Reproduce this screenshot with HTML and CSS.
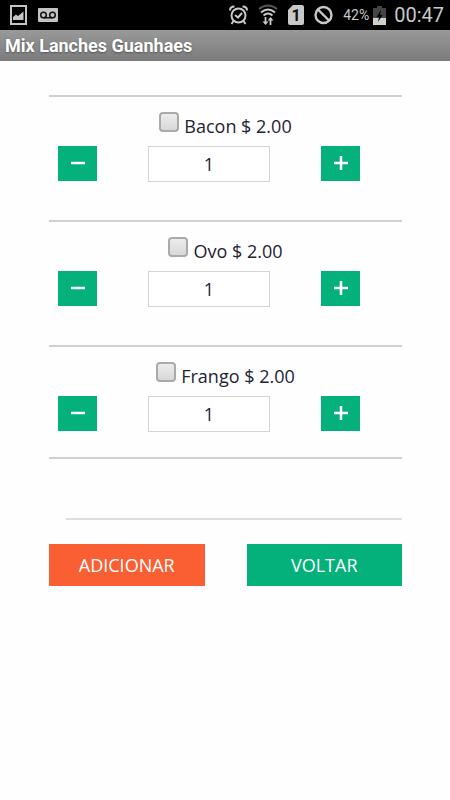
FILE: index.html
```html
<!DOCTYPE html>
<html lang="pt-BR">
<head>
    <meta charset="UTF-8">
    <meta name="viewport" content="width=device-width, initial-scale=1.0">
    <title>Mix Lanches Guanhaes</title>
    <link rel="stylesheet" href="styles.css">
</head>
<body>

    <div class="status-bar">
        <div class="status-left">
            <svg width="17" height="20" viewBox="0 0 17 20">
                <rect x="1" y="1" width="15" height="18" fill="none" stroke="#c4c4c4" stroke-width="2"/>
                <path d="M3 15V12L6 9.500L8 11L13.500 6.500V15Z" fill="#c4c4c4"/>
            </svg>
            <svg width="20" height="14" viewBox="0 0 20 14">
                <rect width="20" height="14" rx="1" fill="#c4c4c4"/>
                <path d="M5.500 9.800H14.500" stroke="#111" stroke-width="1.500"/>
                <circle cx="5.500" cy="7" r="2.800" fill="none" stroke="#111" stroke-width="1.500"/>
                <circle cx="14.500" cy="7" r="2.800" fill="none" stroke="#111" stroke-width="1.500"/>
            </svg>
        </div>
        <div class="status-right">
            <svg width="19" height="20" viewBox="0 0 19 20" fill="none" stroke="#c8c8c8" stroke-width="2">
                <circle cx="9.500" cy="10.500" r="7"/>
                <path d="M1 5.500C1 3 3 1.500 5.500 1.500M18 5.500C18 3 16 1.500 13.500 1.500M4.500 16L2.500 19M14.500 16L16.500 19"/>
                <path d="M6 10L9 12.500L13 8"/>
            </svg>
            <svg width="20" height="22" viewBox="0 0 20 22" fill="none" stroke="#c8c8c8" stroke-width="2">
                <path d="M1 5Q10 -2 19 5" stroke="#555"/>
                <path d="M3 8.500Q10 2.500 17 8.500M5.500 11.500Q10 7.500 14.500 11.500"/>
                <path d="M7.500 13V19M12.500 21V14" stroke-width="1.800"/>
                <path d="M4.500 17.500L7.500 21L10.500 17.500ZM9.700 16.500L12.500 13L15.500 16.500Z" fill="#c8c8c8" stroke="none"/>
            </svg>
            <svg width="16" height="20" viewBox="0 0 16 20">
                <path d="M5 0H14Q16 0 16 2V18Q16 20 14 20H2Q0 20 0 18V5Z" fill="#c8c8c8"/>
                <text class="sim-number" x="8" y="16" text-anchor="middle">1</text>
            </svg>
            <svg width="19" height="20" viewBox="0 0 19 20" fill="none" stroke="#c8c8c8" stroke-width="2.400">
                <circle cx="9.500" cy="10" r="8"/>
                <path d="M4 4.500L15 15.500"/>
            </svg>
            <span class="battery-text">42%</span>
            <svg width="13" height="19" viewBox="0 0 13 19">
                <path d="M4 0H9V2H13V19H0V2H4Z" fill="#444"/>
                <path d="M0 12H13V19H0Z" fill="#d0d0d0"/>
                <path d="M8 4L3.500 11H6L5 16L9.500 9H7Z" fill="#000"/>
            </svg>
            <span class="clock">00:47</span>
        </div>
    </div>

    <h1 class="title-bar">Mix Lanches Guanhaes</h1>

    <form class="extras">
        <div class="item">
            <label class="item-name"><input type="checkbox" class="check"> Bacon $ 2.00</label>
            <div class="quantity">
                <button type="button" class="minus" aria-label="Diminuir">
                    <svg width="14" height="14" viewBox="0 0 14 14"><path d="M0 7H14" stroke="#fff" stroke-width="2.500"/></svg>
                </button>
                <input type="text" class="amount" value="1" aria-label="Quantidade de Bacon">
                <button type="button" class="plus" aria-label="Aumentar">
                    <svg width="14" height="14" viewBox="0 0 14 14"><path d="M0 7H14M7 0V14" stroke="#fff" stroke-width="2.500"/></svg>
                </button>
            </div>
        </div>

        <div class="item">
            <label class="item-name"><input type="checkbox" class="check"> Ovo $ 2.00</label>
            <div class="quantity">
                <button type="button" class="minus" aria-label="Diminuir">
                    <svg width="14" height="14" viewBox="0 0 14 14"><path d="M0 7H14" stroke="#fff" stroke-width="2.500"/></svg>
                </button>
                <input type="text" class="amount" value="1" aria-label="Quantidade de Ovo">
                <button type="button" class="plus" aria-label="Aumentar">
                    <svg width="14" height="14" viewBox="0 0 14 14"><path d="M0 7H14M7 0V14" stroke="#fff" stroke-width="2.500"/></svg>
                </button>
            </div>
        </div>

        <div class="item">
            <label class="item-name"><input type="checkbox" class="check"> Frango $ 2.00</label>
            <div class="quantity">
                <button type="button" class="minus" aria-label="Diminuir">
                    <svg width="14" height="14" viewBox="0 0 14 14"><path d="M0 7H14" stroke="#fff" stroke-width="2.500"/></svg>
                </button>
                <input type="text" class="amount" value="1" aria-label="Quantidade de Frango">
                <button type="button" class="plus" aria-label="Aumentar">
                    <svg width="14" height="14" viewBox="0 0 14 14"><path d="M0 7H14M7 0V14" stroke="#fff" stroke-width="2.500"/></svg>
                </button>
            </div>
        </div>

        <hr class="line">
        <hr class="line line-short">

        <div class="actions">
            <button type="submit" class="add">ADICIONAR</button>
            <button type="button" class="back">VOLTAR</button>
        </div>
    </form>

</body>
</html>
```
FILE: styles.css
```css
* {
    box-sizing: border-box;
}
body {
    margin: 0;
    background: #fefefe;
    color: #1f2333;
    font-family: "Open Sans", sans-serif;
    font-size: 18px;
}
svg {
    display: block;
}
.status-bar {
    display: flex;
    justify-content: space-between;
    align-items: center;
    height: 30px;
    padding: 0 6px 0 10px;
    background: #000;
    color: #c8c8c8;
    font-family: Roboto, sans-serif;
}
.status-left {
    display: flex;
    align-items: center;
    gap: 11px;
}
.status-right {
    display: flex;
    align-items: center;
    gap: 10px;
}
.sim-number {
    fill: #111;
    font-size: 16px;
    font-weight: bold;
}
.battery-text {
    margin-right: -6px;
    font-size: 14px;
}
.clock {
    margin-left: -2px;
    font-size: 20px;
}
.title-bar {
    margin: 0;
    padding: 0 5px;
    background: linear-gradient(#999, #7c7c7c);
    color: #fff;
    font-family: Roboto, sans-serif;
    font-size: 18px;
    font-weight: bold;
    line-height: 31px;
    text-shadow: 0 1px 2px #555;
}
.extras {
    padding: 34px 48px 0 49px;
}
.item {
    padding-top: 15px;
    border-top: 2px solid #d0d0d0;
}
.item + .item {
    margin-top: 38px;
}
.item-name {
    display: flex;
    justify-content: center;
    gap: 5px;
    height: 34px;
    line-height: 28px;
}
.check {
    appearance: none;
    width: 20px;
    height: 20px;
    margin: 0;
    border: 2px solid #aaa;
    border-radius: 4px;
    background: linear-gradient(#ececec, #d8d8d8);
}
.quantity {
    display: flex;
    justify-content: space-between;
    padding: 0 42px 0 9px;
}
.minus,
.plus {
    display: flex;
    justify-content: center;
    align-items: center;
    width: 39px;
    height: 35px;
    padding: 0 0 1px;
    border: none;
    background: #04b17a;
    cursor: pointer;
}
.amount {
    width: 122px;
    height: 36px;
    padding: 0;
    border: 1px solid #d4d4d4;
    background: #fff;
    color: inherit;
    font: inherit;
    text-align: center;
}
.line {
    margin: 25px 0 0;
    border: none;
    border-top: 2px solid #d0d0d0;
}
.line-short {
    margin: 59px 0 0 17px;
    border-color: #dedede;
}
.actions {
    display: grid;
    grid-template-columns: 1fr 1fr;
    gap: 42px;
    margin-top: 24px;
}
.add,
.back {
    height: 42px;
    padding: 0;
    border: none;
    background: #04b17a;
    color: #fff;
    font: inherit;
    cursor: pointer;
}
.add {
    background: #f95f33;
}
```
